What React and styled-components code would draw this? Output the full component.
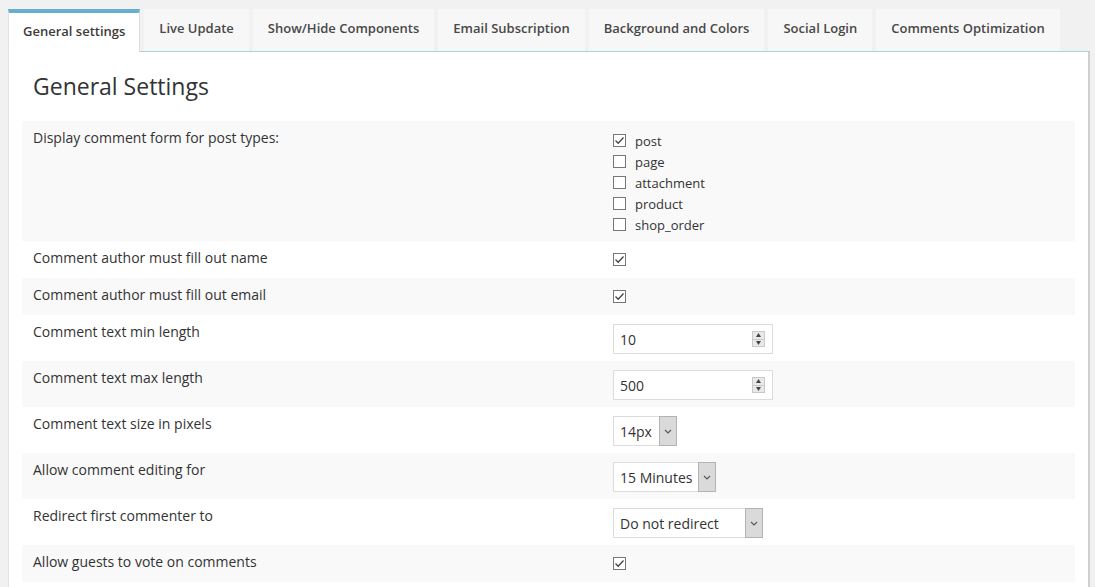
import React from 'react';
import styled, { createGlobalStyle } from 'styled-components';

const GlobalStyle = createGlobalStyle`
  html, body {
    margin: 0;
    padding: 0;
    background: #f1f1f1;
    font-family: "Open Sans", "Liberation Sans", sans-serif;
    color: #333;
  }
`;

const Page = styled.div`
  padding: 9px 5px 0 8px;
  height: 587px;
  box-sizing: border-box;
  overflow: hidden;
`;

const TabBar = styled.div`
  display: flex;
  align-items: stretch;
  gap: 4px;
  height: 43px;
  border-bottom: 1px solid #a8d0e2;
  box-sizing: border-box;
`;

const Tab = styled.div`
  display: flex;
  align-items: ${(p) => (p.active ? 'flex-end' : 'center')};
  padding: ${(p) => (p.active ? '0 14px 12px' : '0 15px 4px')};
  background: ${(p) => (p.active ? '#fff' : '#f7f7f7')};
  border-top: ${(p) => (p.active ? '4px solid #6aaecd' : '0')};
  border-left: ${(p) => (p.active ? '1px solid #e2e2e2' : '0')};
  border-right: ${(p) => (p.active ? '1px solid #dcdcdc' : '0')};
  margin-bottom: ${(p) => (p.active ? '-1px' : '0')};
  font-size: 13px;
  font-weight: 600;
  color: ${(p) => (p.active ? '#3c3c3c' : '#484848')};
  white-space: nowrap;
  box-sizing: border-box;
`;

const Panel = styled.div`
  background: #fff;
  border-left: 1px solid #e4e4e4;
  border-right: 2px solid #cfcfcf;
  padding: 19px 13px 0 13px;
  min-height: 560px;
`;

const Heading = styled.h2`
  margin: 0 0 20px 11px;
  font-size: 23px;
  line-height: 30px;
  font-weight: 400;
  color: #333;
`;

const Table = styled.div`
  display: flex;
  flex-direction: column;
`;

const Row = styled.div`
  display: grid;
  grid-template-columns: 580px 1fr;
  align-items: start;
  padding: ${(p) => (p.list ? '7px 11px 6px' : '7px 11px 8px')};
  background: ${(p) => (p.shade ? '#f9f9f9' : '#fff')};
`;

const Label = styled.div`
  font-size: 14px;
  line-height: 20px;
  color: #333;
`;

const Value = styled.div`
  min-height: 22px;
  display: flex;
  flex-direction: column;
  align-items: flex-start;
  justify-content: center;
`;

const List = styled.div`
  display: flex;
  flex-direction: column;
  padding-top: 2px;
`;

const CheckItem = styled.label`
  display: flex;
  align-items: center;
  gap: 9px;
  height: 21px;
  font-size: 13px;
  color: #333;
`;

const Box = styled.span`
  width: 13px;
  height: 13px;
  border: 1px solid #777;
  box-sizing: border-box;
  background: #fff;
  display: flex;
  align-items: center;
  justify-content: center;
  flex-shrink: 0;
`;

const Field = styled.div`
  display: flex;
  align-items: center;
  justify-content: space-between;
  width: ${(p) => p.width}px;
  height: 30px;
  border: 1px solid #dcdcdc;
  box-sizing: border-box;
  background: #fff;
  padding-left: 6px;
  margin: 2px 0 -1px;
  font-size: 14px;
  color: #333;
`;

const Spinner = styled.div`
  display: flex;
  flex-direction: column;
  width: 13px;
  height: 16px;
  margin-right: 7px;
  border: 1px solid #c9c9c9;
  background: #e9e9e9;
  box-sizing: border-box;
`;

const SpinHalf = styled.div`
  flex: 1;
  display: flex;
  align-items: center;
  justify-content: center;
  border-top: ${(p) => (p.bottom ? '1px solid #c9c9c9' : '0')};
`;

const Arrow = styled.div`
  width: 18px;
  height: 30px;
  margin: -1px -1px -1px 0;
  background: #dadada;
  border: 1px solid #b3b3b3;
  box-sizing: border-box;
  display: flex;
  align-items: center;
  justify-content: center;
`;

const Check = () => (
  <svg width="11" height="9" viewBox="0 0 11 9">
    <path d="M1.5 4.5 L4.2 7.2 L9.5 1.5" fill="none" stroke="#444" strokeWidth="1.3" />
  </svg>
);

const Checkbox = ({ checked }) => <Box>{checked && <Check />}</Box>;

const NumberField = ({ value }) => (
  <Field width={160}>
    {value}
    <Spinner>
      <SpinHalf>
        <svg width="5" height="4" viewBox="0 0 5 4">
          <path d="M2.5 0 L5 4 L0 4 Z" fill="#444" />
        </svg>
      </SpinHalf>
      <SpinHalf bottom>
        <svg width="5" height="4" viewBox="0 0 5 4">
          <path d="M0 0 L5 0 L2.5 4 Z" fill="#444" />
        </svg>
      </SpinHalf>
    </Spinner>
  </Field>
);

const Select = ({ value, width }) => (
  <Field width={width}>
    {value}
    <Arrow>
      <svg width="8" height="5" viewBox="0 0 8 5">
        <path d="M1 1 L4 4 L7 1" fill="none" stroke="#555" strokeWidth="1.1" />
      </svg>
    </Arrow>
  </Field>
);

const tabs = [
  'General settings',
  'Live Update',
  'Show/Hide Components',
  'Email Subscription',
  'Background and Colors',
  'Social Login',
  'Comments Optimization',
];

const postTypes = [
  { name: 'post', checked: true },
  { name: 'page' },
  { name: 'attachment' },
  { name: 'product' },
  { name: 'shop_order' },
];

export default function App() {
  return (
    <Page>
      <GlobalStyle />
      <TabBar>
        {tabs.map((t, i) => (
          <Tab key={t} active={i === 0}>
            {t}
          </Tab>
        ))}
      </TabBar>
      <Panel>
        <Heading>General Settings</Heading>
        <Table>
          <Row shade list>
            <Label>Display comment form for post types:</Label>
            <List>
              {postTypes.map((p) => (
                <CheckItem key={p.name}>
                  <Checkbox checked={p.checked} />
                  {p.name}
                </CheckItem>
              ))}
            </List>
          </Row>
          <Row>
            <Label>Comment author must fill out name</Label>
            <Value>
              <Checkbox checked />
            </Value>
          </Row>
          <Row shade>
            <Label>Comment author must fill out email</Label>
            <Value>
              <Checkbox checked />
            </Value>
          </Row>
          <Row>
            <Label>Comment text min length</Label>
            <Value>
              <NumberField value="10" />
            </Value>
          </Row>
          <Row shade>
            <Label>Comment text max length</Label>
            <Value>
              <NumberField value="500" />
            </Value>
          </Row>
          <Row>
            <Label>Comment text size in pixels</Label>
            <Value>
              <Select value="14px" width={64} />
            </Value>
          </Row>
          <Row shade>
            <Label>Allow comment editing for</Label>
            <Value>
              <Select value="15 Minutes" width={103} />
            </Value>
          </Row>
          <Row>
            <Label>Redirect first commenter to</Label>
            <Value>
              <Select value="Do not redirect" width={150} />
            </Value>
          </Row>
          <Row shade>
            <Label>Allow guests to vote on comments</Label>
            <Value>
              <Checkbox checked />
            </Value>
          </Row>
        </Table>
      </Panel>
    </Page>
  );
}
